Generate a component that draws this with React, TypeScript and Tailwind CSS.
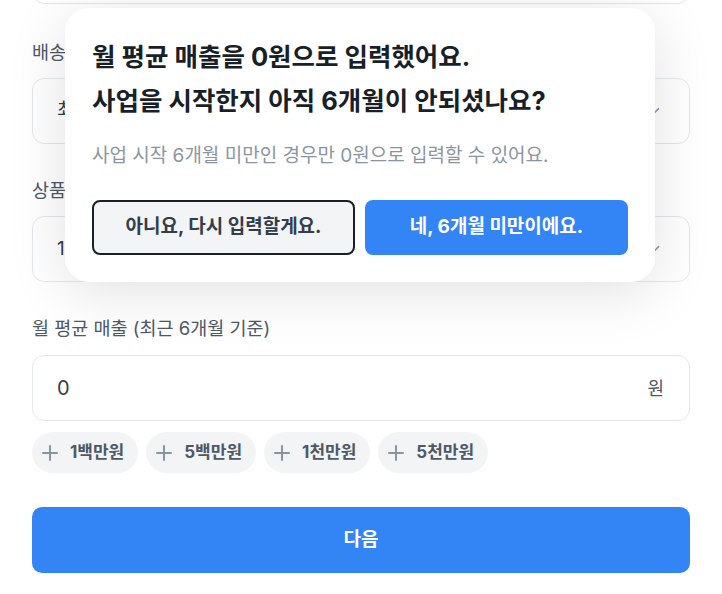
import { Plus, ChevronDown } from 'lucide-react';

const font = { fontFamily: 'Inter, "Noto Sans CJK KR", sans-serif' };

function Label({ children, first }: { children: React.ReactNode; first?: boolean }) {
  return (
    <p className={`${first ? 'mt-[36px]' : 'mt-[34px]'} mb-[14px] text-[18.5px] leading-[24px] text-[#4e5968]`}>
      {children}
    </p>
  );
}

function SelectBox({ value }: { value: string }) {
  return (
    <div className="h-[66px] rounded-[12px] border border-[#e5e8eb] bg-white pl-[24px] pr-[26px] flex items-center justify-between">
      <span className="text-[19px] text-[#333d4b]">{value}</span>
      <ChevronDown className="w-[18px] h-[18px] text-[#8b95a1]" strokeWidth={2.2} />
    </div>
  );
}

const chips = ['1백만원', '5백만원', '1천만원', '5천만원'];

export default function App() {
  return (
    <div className="relative min-h-screen bg-white overflow-hidden" style={font}>
      <div className="px-[32px] flex flex-col">
        {/* field scrolled above the top edge */}
        <div className="-mt-[62px] h-[66px] rounded-[12px] border border-[#e5e8eb]" />

        {/* these two fields sit mostly under the popup */}
        <Label first>배송</Label>
        <SelectBox value="최" />

        <Label>상품</Label>
        <SelectBox value="1" />

        <Label>월 평균 매출 (최근 6개월 기준)</Label>
        <div className="mt-[1px] h-[66px] rounded-[12px] border border-[#e5e8eb] bg-white pl-[24px] pr-[25px] flex items-center justify-between">
          <span className="text-[20px] text-[#333d4b]">0</span>
          <span className="text-[18px] text-[#4e5968]">원</span>
        </div>

        <div className="mt-[11px] flex gap-[8px]">
          {chips.map((c) => (
            <button
              key={c}
              className="h-[41px] rounded-full bg-[#f2f4f6] pl-[6px] pr-[14px] flex items-center gap-[8px]"
            >
              <Plus className="w-[24px] h-[24px] text-[#8b95a1]" strokeWidth={2} />
              <span className="text-[17px] font-bold text-[#4e5968]">{c}</span>
            </button>
          ))}
        </div>

        <button className="mt-[34px] h-[66px] rounded-[10px] bg-[#3384f5] text-white text-[19px] font-semibold flex items-center justify-center">
          다음
        </button>
      </div>

      {/* confirm popup */}
      <div className="absolute left-[65px] top-[8px] w-[590px] rounded-[24px] bg-white p-[27px] shadow-[0_10px_60px_rgba(0,0,0,0.12)]">
        <h2 className="text-[25.5px] leading-[44px] font-bold text-[#191f28] whitespace-nowrap">
          월 평균 매출을 0원으로 입력했어요.
          <br />
          사업을 시작한지 아직 6개월이 안되셨나요?
        </h2>
        <p className="mt-[20px] text-[19px] leading-[26px] text-[#8b95a1]">
          사업 시작 6개월 미만인 경우만 0원으로 입력할 수 있어요.
        </p>
        <div className="mt-[31px] grid grid-cols-2 gap-[10px]">
          <button className="h-[55px] rounded-[8px] border-2 border-[#191f28] bg-[#f2f4f6] text-[19px] font-bold text-[#333d4b]">
            아니요, 다시 입력할게요.
          </button>
          <button className="h-[55px] rounded-[8px] bg-[#3384f5] text-[19px] font-bold text-white">
            네, 6개월 미만이에요.
          </button>
        </div>
      </div>
    </div>
  );
}
